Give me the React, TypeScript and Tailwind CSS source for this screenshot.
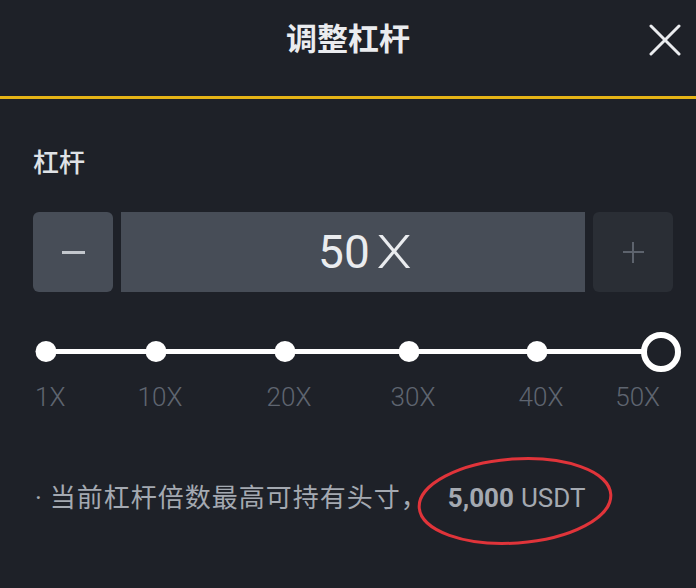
export default function App() {
  // 刻度位置 (px, 相对于滑块容器)
  const marks = [
    { x: 13, label: "1" },
    { x: 123, label: "10" },
    { x: 252, label: "20" },
    { x: 376, label: "30" },
    { x: 504, label: "40" },
  ]

  return (
    <div className="min-h-screen w-full bg-[#1e2128] font-['Roboto','Noto_Sans_CJK_SC',sans-serif]">
      {/* 标题栏 */}
      <header className="grid h-[99px] grid-cols-[1fr_auto_1fr] items-start border-b-[3px] border-[#e6b416] pt-[21px]">
        <div />
        <h1 className="text-[31px] font-bold leading-[38px] text-[#eaecef]">调整杠杆</h1>
        <div className="flex justify-end pr-[15px] pt-[3px]">
          <svg width="32" height="32" viewBox="0 0 32 32" className="text-[#eaecef]">
            <path d="M2 2 L30 30 M30 2 L2 30" stroke="currentColor" strokeWidth="3" strokeLinecap="round" fill="none" />
          </svg>
        </div>
      </header>

      <section className="pl-[33px] pr-[23px]">
        <div className="pt-[50px] text-[26px] font-medium leading-[28px] text-[#dfe2e6]">杠杆</div>

        {/* 数值输入行 */}
        <div className="mt-[35px] flex h-[80px] gap-[8px]">
          <button className="flex w-[80px] items-center justify-center rounded-[6px] bg-[#474d57]">
            <span className="block h-[3px] w-[23px] bg-[#c3c7cd]" />
          </button>
          <div className="flex flex-1 items-center justify-center bg-[#474d57] pl-[20px] text-[46px] leading-none text-[#eaecef]">
            <span>50</span>
            <span className="ml-[10px] inline-block scale-x-125 font-light">X</span>
          </div>
          <button className="relative flex w-[80px] items-center justify-center rounded-[6px] bg-[#2a2e35]">
            <span className="absolute h-[2px] w-[21px] bg-[#5d636d]" />
            <span className="absolute h-[21px] w-[2px] bg-[#5d636d]" />
          </button>
        </div>

        {/* 滑块 */}
        <div className="relative mt-[40px] h-[80px]">
          <div className="absolute left-[13px] top-[17px] h-[5px] w-[614px] bg-white" />
          {marks.map((m) => (
            <div key={m.x} className="absolute top-[9px] h-[21px] w-[21px] -translate-x-1/2 rounded-full bg-white" style={{ left: m.x }} />
          ))}
          <div className="absolute left-[628px] top-0 h-[40px] w-[40px] -translate-x-1/2 rounded-full border-[6px] border-white bg-[#1e2128]" />
          {marks.map((m, i) => (
            <div
              key={m.label}
              className={`absolute top-[52px] text-[26px] font-light leading-[26px] text-[#5f6570] ${i === 0 ? "" : "-translate-x-1/2"}`}
              style={{ left: i === 0 ? 2 : m.x + 4 }}
            >
              {m.label}X
            </div>
          ))}
          <div className="absolute right-[13px] top-[52px] text-[26px] font-light leading-[26px] text-[#5f6570]">50X</div>
        </div>

        {/* 提示 */}
        <div className="mt-[71px] flex items-center text-[26px] leading-[30px] text-[#a4a9b1]">
          <span className="mr-[8px] pl-[2px]">·</span>
          <span className="tracking-[1px]">当前杠杆倍数最高可持有头寸，</span>
          <span className="relative ml-[20px]">
            <span className="font-bold">5,000</span>
            <span className="ml-[7px]">USDT</span>
            <svg
              className="absolute left-[-32px] top-[-28px]"
              width="198"
              height="92"
              viewBox="0 0 198 92"
            >
              <ellipse cx="99" cy="46" rx="96" ry="42" transform="rotate(-4 99 46)" fill="none" stroke="#e0343a" strokeWidth="3" />
            </svg>
          </span>
        </div>
      </section>
    </div>
  )
}
